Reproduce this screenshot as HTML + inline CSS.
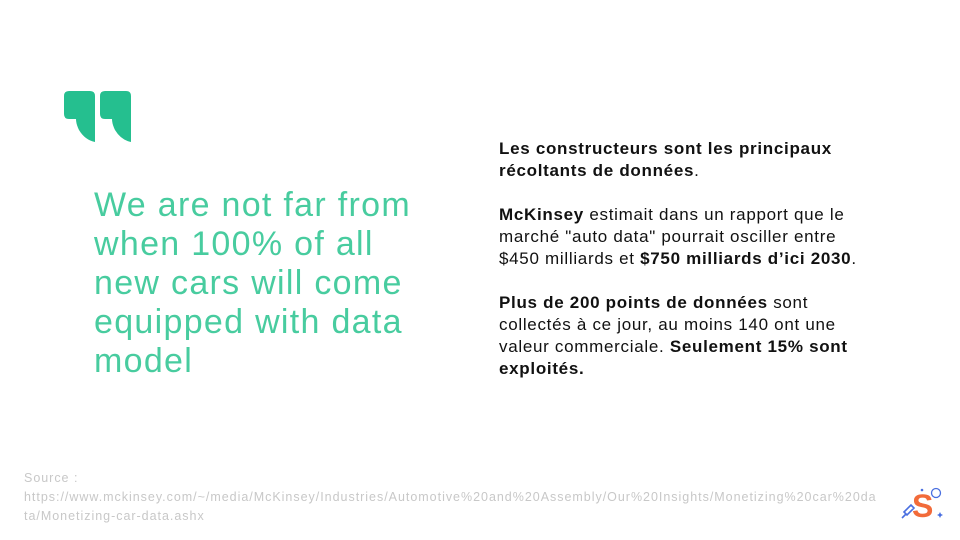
<!DOCTYPE html>
<html><head><meta charset="utf-8"><style>
body{margin:0;width:960px;height:540px;background:#fff;position:relative;overflow:hidden;font-family:"Liberation Sans",sans-serif}
.q{position:absolute;left:94px;top:186px;color:#48cc9f;font-size:34px;line-height:39px;letter-spacing:1.3px;white-space:nowrap}
.r{position:absolute;left:499px;top:138px;width:364px;font-size:17px;line-height:22px;color:#111;letter-spacing:0.7px}
.r p{margin:0 0 22px}
.src{position:absolute;left:24px;top:469px;font-size:12.5px;line-height:19px;color:#c8c8c8;letter-spacing:0.98px;white-space:nowrap}
</style></head><body>
<svg style="position:absolute;left:64px;top:90px" width="68" height="54" viewBox="0 0 68 54">
<g fill="#25bf8f">
<path d="M5 1H26Q31 1 31 6V52Q21 50 15 40Q12 34 12 29H5Q0 29 0 24V6Q0 1 5 1Z"/>
<path transform="translate(36 0)" d="M5 1H26Q31 1 31 6V52Q21 50 15 40Q12 34 12 29H5Q0 29 0 24V6Q0 1 5 1Z"/>
</g>
</svg>
<div class="q">We are not far from<br>when 100% of all<br>new cars will come<br>equipped with data<br>model</div>
<div class="r">
<p><b>Les constructeurs sont les principaux récoltants de données</b>.</p>
<p><b>McKinsey</b> estimait dans un rapport que le marché "auto data" pourrait osciller entre $450 milliards et <b>$750 milliards d’ici 2030</b>.</p>
<p><b>Plus de 200 points de données</b> sont collectés à ce jour, au moins 140 ont une valeur commerciale. <b>Seulement 15% sont exploités.</b></p>
</div>
<div class="src">Source :<br>https://www.mckinsey.com/~/media/McKinsey/Industries/Automotive%20and%20Assembly/Our%20Insights/Monetizing%20car%20da<br>ta/Monetizing-car-data.ashx</div>
<svg style="position:absolute;left:900px;top:486px" width="46" height="36" viewBox="0 0 46 36">
<text x="12" y="31" font-family="Liberation Sans" font-weight="bold" font-size="32" fill="#f26b3a">S</text>
<path d="M4 26l7-7 3 3-7 7z M2 32l4-4" stroke="#4a6fe0" stroke-width="1.6" fill="none"/>
<circle cx="36" cy="7" r="4.5" stroke="#4a6fe0" stroke-width="1.3" fill="none"/>
<circle cx="22" cy="4" r="1.3" fill="#4a6fe0"/>
<path d="M40 26l1 2 2 1-2 1-1 2-1-2-2-1 2-1z" fill="#4a6fe0"/>
</svg>
</body></html>
